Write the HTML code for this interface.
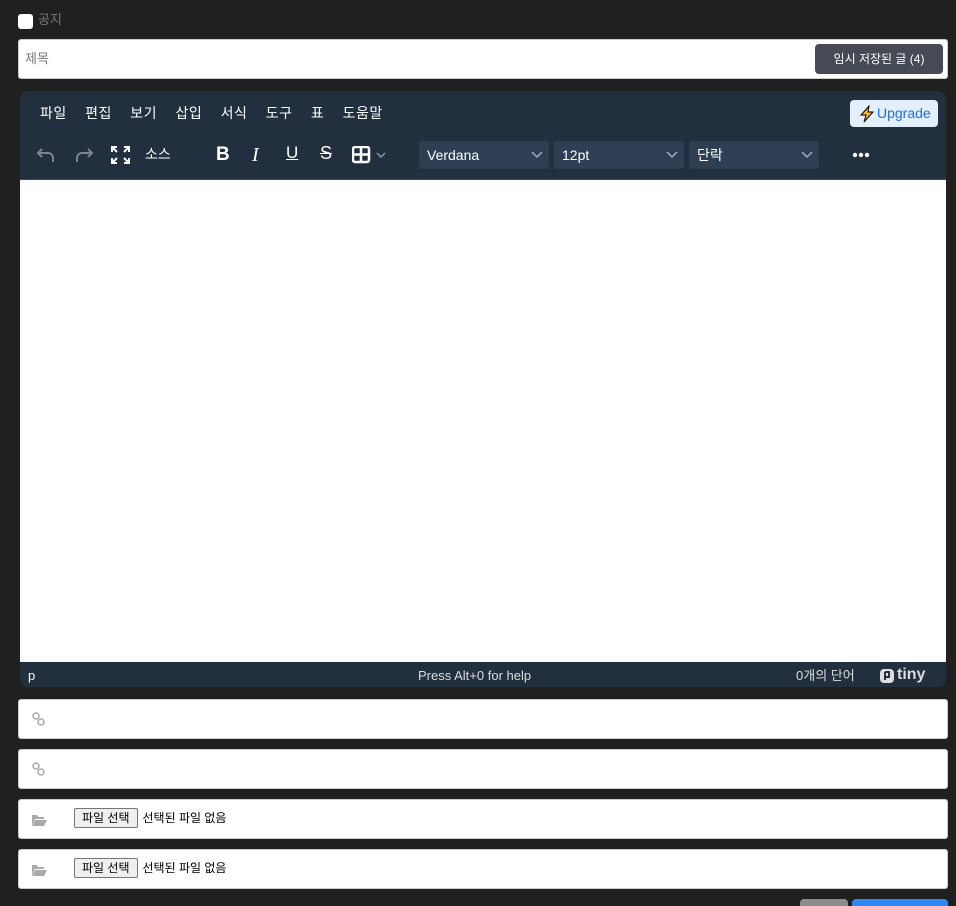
<!DOCTYPE html><html><head><meta charset="utf-8"><style>
*{box-sizing:border-box;margin:0;padding:0}
html,body{width:956px;height:906px;overflow:hidden}
body{background:#202020;font-family:"Liberation Sans","Noto Sans CJK KR",sans-serif;position:relative}
.a{position:absolute;line-height:1.2}
.w{color:#fff;font-size:14px}
.inp{position:absolute;left:18px;width:930px;height:40px;background:#fff;border:1px solid #ccc;border-radius:3px}
.sel{position:absolute;top:141px;height:28px;background:#2f3f53;border-radius:3px;color:#fff;font-size:14px;padding:0 8px;line-height:28px}
.sel svg{position:absolute;right:6px;top:10px}
.fb{position:absolute;left:55px;top:8px;font-size:12px;color:#000;display:flex;align-items:center;line-height:1.2}
.fb span.b{border:1px solid #767676;background:#efefef;padding:2px 7px;border-radius:2px;margin-right:5px}
</style></head><body>
<div class="a" style="left:18px;top:14px;width:15px;height:15px;background:#fff;border-radius:3px"></div>
<div class="a" style="left:38px;top:12px;font-size:13px;color:#777">공지</div>
<div class="a" style="left:18px;top:39px;width:930px;height:40px;background:#fff;border:1px solid #ccc;border-radius:3px"></div>
<div class="a" style="left:25px;top:51px;font-size:13px;color:#777">제목</div>
<div class="a" style="left:815px;top:44px;width:128px;height:30px;background:#454a54;border-radius:4px;color:#fff;font-size:12px;text-align:center;line-height:30px">임시 저장된 글 (4)</div>
<div class="a" style="left:20px;top:91px;width:926px;height:596px;background:#222f3e;border-radius:8px"></div>
<div class="a w" style="left:40px;top:105px;word-spacing:14px;letter-spacing:0.5px">파일 편집 보기 삽입 서식 도구 표 도움말</div>
<div class="a" style="left:850px;top:100px;width:88px;height:27px;background:#e3effc;border-radius:4px;color:#206ee0;font-size:14px;line-height:27px;padding-left:27px">Upgrade</div>
<svg class="a" style="left:858px;top:105px" width="18" height="18" viewBox="0 0 18 18"><path d="M11 1L3 10h5l-2 7 9-10H10z" fill="#f5b72a" stroke="#000" stroke-width="1"/></svg>
<svg class="a" style="left:36px;top:144px" width="120" height="22" viewBox="0 0 120 22" fill="none" stroke="#7b8590" stroke-width="2">
<path d="M6 5L2 9l4 4M2 9h10a5 5 0 0 1 5 5v4"/>
<path d="M52 5l4 4-4 4M56 9H46a5 5 0 0 0-5 5v4"/>
<g stroke="#fff"><path d="M76 8V3h5M88 3h5v5M93 14v5h-5M81 19h-5v-5M76 3l5 5M93 3l-5 5M93 19l-5-5M76 19l5-5"/></g></svg>
<div class="a w" style="left:145px;top:146px">소스</div>
<div class="a" style="left:216px;top:144px;color:#fff;font-size:19px;font-weight:bold">B</div>
<div class="a" style="left:252px;top:143px;color:#fff;font-size:20px;font-style:italic;font-family:'Liberation Serif',serif">I</div>
<div class="a" style="left:286px;top:143px;color:#fff;font-size:17px;text-decoration:underline">U</div>
<div class="a" style="left:320px;top:143px;color:#fff;font-size:18px;text-decoration:line-through">S</div>
<svg class="a" style="left:352px;top:146px" width="38" height="18" viewBox="0 0 38 18"><rect x="1" y="1" width="16" height="15" rx="2" fill="none" stroke="#fff" stroke-width="2.5"/><path d="M1 8.5h16M9 1v15" stroke="#fff" stroke-width="2.5"/><path d="M25 7l4 4 4-4" stroke="#8a95a3" fill="none" stroke-width="1.5"/></svg>
<div class="sel" style="left:419px;width:130px">Verdana<svg width="12" height="8"><path d="M1 1l5 5 5-5" stroke="#aab" fill="none" stroke-width="1.5"/></svg></div>
<div class="sel" style="left:554px;width:130px">12pt<svg width="12" height="8"><path d="M1 1l5 5 5-5" stroke="#aab" fill="none" stroke-width="1.5"/></svg></div>
<div class="sel" style="left:689px;width:130px">단락<svg width="12" height="8"><path d="M1 1l5 5 5-5" stroke="#aab" fill="none" stroke-width="1.5"/></svg></div>
<svg class="a" style="left:852px;top:152px" width="18" height="6"><circle cx="3" cy="3" r="2.2" fill="#fff"/><circle cx="9" cy="3" r="2.2" fill="#fff"/><circle cx="15" cy="3" r="2.2" fill="#fff"/></svg>
<div class="a" style="left:20px;top:179px;width:926px;height:1px;background:#3a4a5e"></div>
<div class="a" style="left:20px;top:180px;width:926px;height:482px;background:#fff"></div>
<div class="a" style="left:28px;top:668px;color:#fff;font-size:13px">p</div>
<div class="a" style="left:418px;top:668px;color:#ddd;font-size:13px">Press Alt+0 for help</div>
<div class="a" style="left:796px;top:667px;color:#ddd;font-size:13px;line-height:18px">0개의 단어</div>
<svg class="a" style="left:879px;top:668px" width="16" height="16"><rect x="1" y="1" width="14" height="14" rx="4" fill="#ddd"/><path d="M6 4v8M6 4h4v5H6" stroke="#222f3e" stroke-width="2" fill="none"/></svg>
<div class="a" style="left:897px;top:665px;color:#ddd;font-size:16px;font-weight:bold">tiny</div>
<div class="inp" style="top:699px"></div><svg class="a" style="left:32px;top:712px" width="14" height="14"><circle cx="4" cy="4" r="3" fill="none" stroke="#aaa" stroke-width="1.5"/><circle cx="9" cy="10" r="3" fill="none" stroke="#aaa" stroke-width="1.5"/></svg>
<div class="inp" style="top:749px"></div><svg class="a" style="left:32px;top:762px" width="14" height="14"><circle cx="4" cy="4" r="3" fill="none" stroke="#aaa" stroke-width="1.5"/><circle cx="9" cy="10" r="3" fill="none" stroke="#aaa" stroke-width="1.5"/></svg>
<div class="inp" style="top:799px"><svg class="a" style="left:13px;top:14px" width="15" height="12"><path d="M0 1h5l1 2h6v2H3L0 11z M3 6h12l-3 6H0z" fill="#aaa"/></svg><div class="fb"><span class="b">파일 선택</span>선택된 파일 없음</div></div>
<div class="inp" style="top:849px"><svg class="a" style="left:13px;top:14px" width="15" height="12"><path d="M0 1h5l1 2h6v2H3L0 11z M3 6h12l-3 6H0z" fill="#aaa"/></svg><div class="fb"><span class="b">파일 선택</span>선택된 파일 없음</div></div>
<div class="a" style="left:800px;top:899px;width:48px;height:20px;background:#8c8c8c;border-radius:4px"></div>
<div class="a" style="left:852px;top:899px;width:96px;height:20px;background:#2f86f6;border-radius:4px"></div>
</body></html>
